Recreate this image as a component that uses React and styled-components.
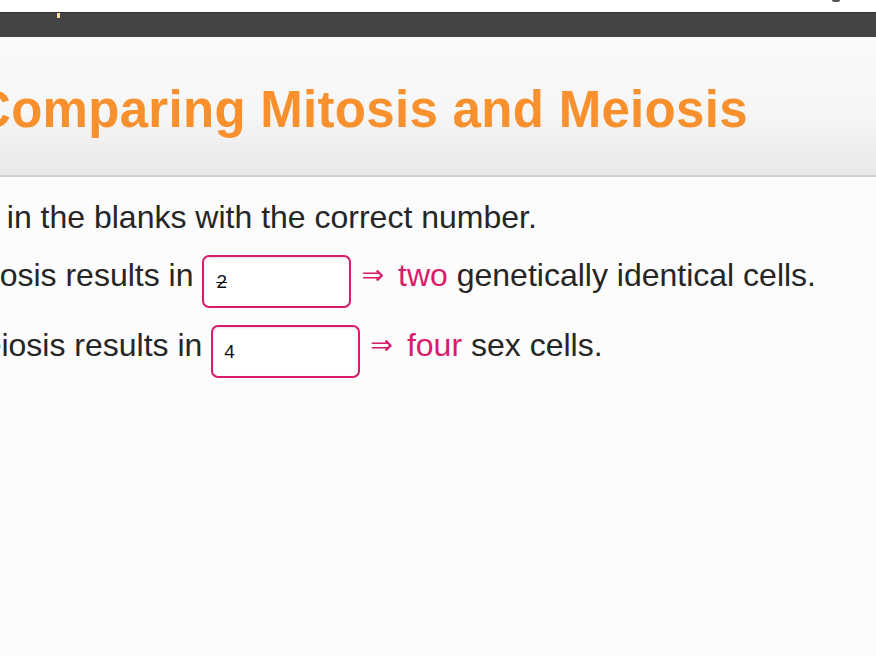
import React from "react";
import styled, { createGlobalStyle } from "styled-components";

const Global = createGlobalStyle`
  html, body { margin: 0; padding: 0; background: #fcfcfc; }
  body { font-family: "Liberation Sans", Arial, sans-serif; overflow: hidden; }
  #root { width: 876px; height: 656px; overflow: hidden; }
`;

const Page = styled.div`
  width: 876px;
  height: 656px;
  overflow: hidden;
  display: flex;
  flex-direction: column;
  background: #fcfcfc;
`;

const TopStrip = styled.div`
  height: 12px;
  background: #ffffff;
  display: flex;
  justify-content: flex-end;
  padding-right: 36px;
`;

const TopMark = styled.span`
  width: 8px;
  height: 2px;
  background: #555;
  border-radius: 0 0 4px 4px;
`;

const Toolbar = styled.div`
  height: 25px;
  background: #444444;
  border-top: 1px solid #333;
  box-sizing: border-box;
  padding-left: 57px;
`;

const ToolMark = styled.span`
  display: block;
  width: 3px;
  height: 5px;
  background: #f3dfa6;
`;

const Header = styled.header`
  height: 140px;
  box-sizing: border-box;
  background: linear-gradient(#fafafa 0%, #f6f6f6 55%, #e9e9e9 100%);
  border-bottom: 2px solid #cfcfcf;
  display: flex;
  align-items: center;
  margin-left: -26px;
  padding-top: 6px;
`;

const Title = styled.h1`
  margin: 0;
  font-family: "Liberation Sans", Arial, sans-serif;
  font-weight: bold;
  font-size: 51px;
  color: #f7902d;
  white-space: nowrap;
  letter-spacing: 0.3px;
`;

const Content = styled.main`
  margin-left: -43px;
  padding-top: 20px;
  display: flex;
  flex-direction: column;
  font-size: 32px;
  line-height: 40px;
  color: #262626;
`;

const Instruction = styled.p`
  margin: 0 0 18px 0;
  white-space: nowrap;
`;

const Row = styled.div`
  display: flex;
  align-items: flex-start;
  margin-bottom: 17px;
  white-space: nowrap;
`;

const Blank = styled.div`
  width: 149px;
  height: 53px;
  box-sizing: border-box;
  border: 2px solid #d81b6a;
  border-radius: 7px;
  background: #ffffff;
  box-shadow: inset 0 1px 2px rgba(0, 0, 0, 0.12);
  display: flex;
  align-items: center;
  padding-left: ${(p) => p.$pad}px;
  font-size: 19px;
  line-height: 1;
  color: #111;
  margin: 0 10px 0 0;
`;

const Struck = styled.span`
  text-decoration: line-through;
  text-decoration-thickness: 1px;
`;

const Answer = styled.span`
  color: #d81b6a;
`;

const Arrow = styled.span`
  color: #d81b6a;
  font-family: "DejaVu Sans", sans-serif;
  font-size: 27px;
  margin-right: 14px;
`;

export default function App() {
  return (
    <Page>
      <Global />
      <TopStrip>
        <TopMark />
      </TopStrip>
      <Toolbar>
        <ToolMark />
      </Toolbar>
      <Header>
        <Title>Comparing Mitosis and Meiosis</Title>
      </Header>
      <Content>
        <Instruction>Fill in the blanks with the correct number.</Instruction>
        <Row>
          Mitosis results in&nbsp;
          <Blank $pad={12}>
            <Struck>2</Struck>
          </Blank>
          <Arrow>⇒</Arrow>
          <Answer>two</Answer>&nbsp;genetically identical cells.
        </Row>
        <Row>
          Meiosis results in&nbsp;
          <Blank $pad={11}>4</Blank>
          <Arrow>⇒</Arrow>
          <Answer>four</Answer>&nbsp;sex cells.
        </Row>
      </Content>
    </Page>
  );
}
